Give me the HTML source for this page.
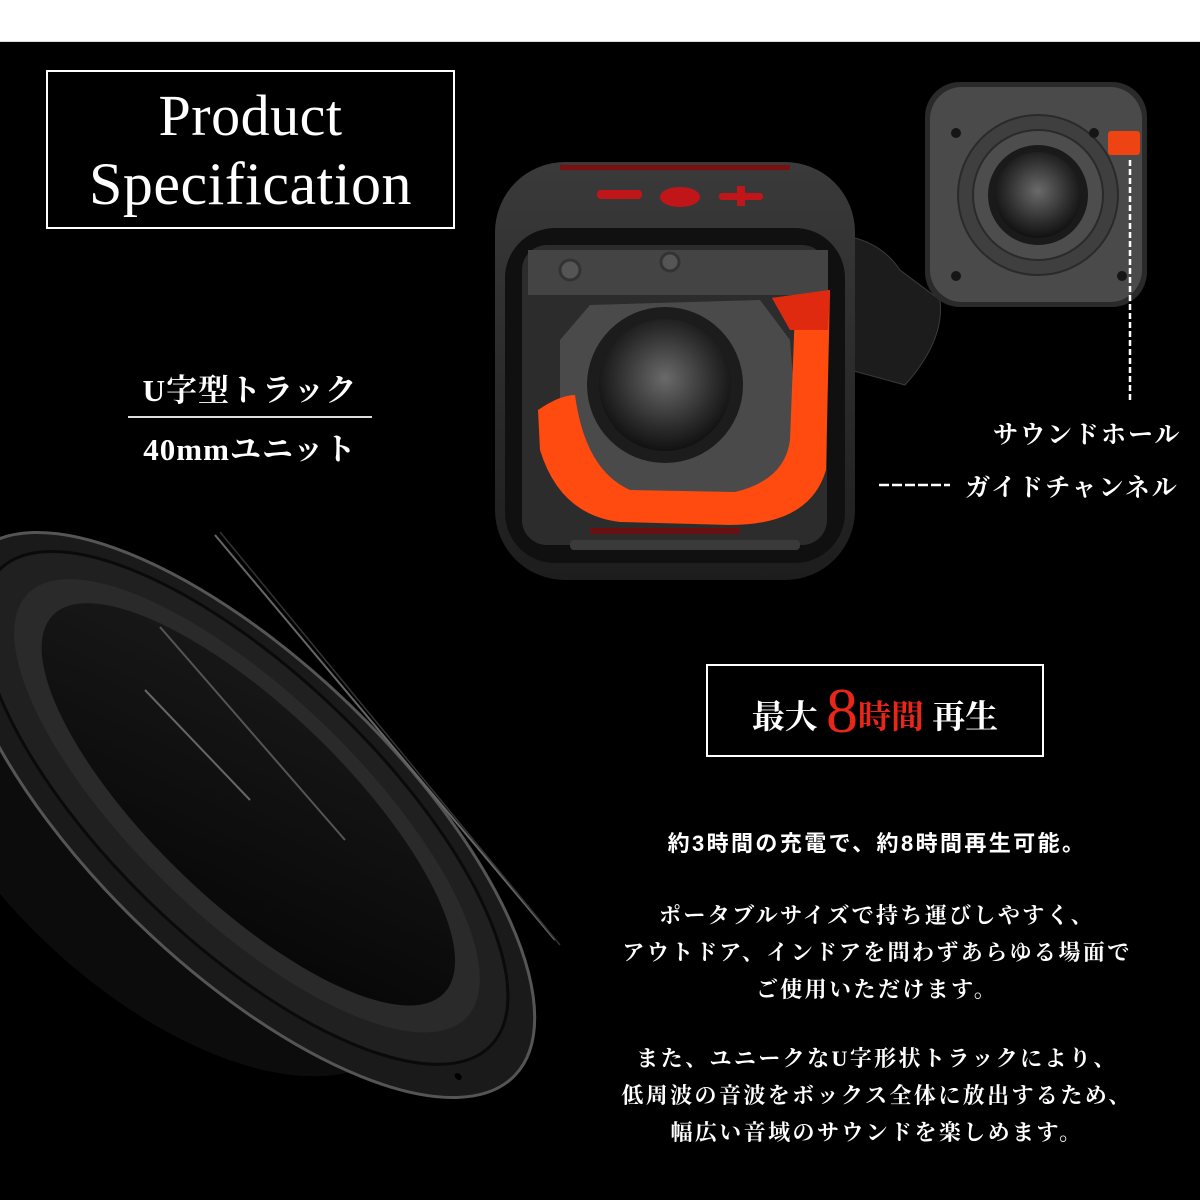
<!DOCTYPE html>
<html><head><meta charset="utf-8"><style>
html,body{margin:0;padding:0;}
body{width:1200px;height:1200px;position:relative;background:#000;overflow:hidden;font-family:"Liberation Serif","Noto Serif CJK JP",serif;color:#fff;}
.top{position:absolute;left:0;top:0;width:1200px;height:41px;background:#fff;border-bottom:1px solid #ddd;}
.abs{position:absolute;}
.title{left:46px;top:70px;width:409px;height:159px;border:2px solid #fff;text-align:center;font-size:58px;line-height:68px;padding-top:10px;box-sizing:border-box;letter-spacing:0.5px;}
.title .s{font-size:60px;}
.utext{left:120px;top:365px;width:260px;text-align:center;font-size:31px;letter-spacing:1px;font-weight:bold;}
.utext .l1{border-bottom:2px solid #ddd;padding-bottom:6px;margin:0 8px;}
.utext .l2{padding-top:6px;}
.lab{font-size:25px;letter-spacing:2px;white-space:nowrap;font-weight:bold;}
.box8{left:706px;top:664px;width:338px;height:93px;border:2px solid #fff;box-sizing:border-box;text-align:center;font-family:"Liberation Serif","Noto Serif CJK JP",serif;font-weight:bold;font-size:33px;line-height:89px;}
.box8 .red{color:#e8261a;}
.box8 .big{font-family:"Liberation Serif",serif;font-weight:normal;font-size:64px;vertical-align:-4px;}
.para{left:577px;width:600px;text-align:center;font-size:22px;letter-spacing:2.4px;line-height:37px;font-weight:bold;}
</style></head><body>
<div class="top"></div>

<svg class="abs" style="left:0;top:0" width="1200" height="1200" viewBox="0 0 1200 1200">
<defs>
<radialGradient id="cone" cx="50%" cy="45%" r="55%"><stop offset="0" stop-color="#6a6a6a"/><stop offset="0.7" stop-color="#2a2a2a"/><stop offset="1" stop-color="#111"/></radialGradient>
<linearGradient id="body" x1="0" y1="0" x2="0" y2="1"><stop offset="0" stop-color="#3a3a3a"/><stop offset="1" stop-color="#1d1d1d"/></linearGradient>
<linearGradient id="big" x1="0" y1="0" x2="1" y2="1"><stop offset="0" stop-color="#1a1a1a"/><stop offset="1" stop-color="#050505"/></linearGradient>
</defs>
<g transform="translate(245,815) rotate(44)">
<ellipse cx="-60" cy="60" rx="330" ry="170" fill="#0c0c0c"/>
<ellipse cx="0" cy="0" rx="375" ry="152" fill="#1a1a1a" stroke="#555" stroke-width="3"/>
<ellipse cx="-5" cy="-5" rx="342" ry="134" fill="#202020" stroke="#0a0a0a" stroke-width="3"/>
<ellipse cx="-5" cy="-8" rx="305" ry="112" fill="#2a2a2a"/>
<ellipse cx="-5" cy="-10" rx="272" ry="96" fill="url(#big)"/>
<ellipse cx="335" cy="40" rx="4" ry="3" fill="#000"/>
</g>
<path d="M215 535 L555 940" stroke="#666" stroke-width="2"/>
<path d="M220 532 L560 945" stroke="#333" stroke-width="1.5"/>
<path d="M160 627 L345 840" stroke="#555" stroke-width="2"/>
<path d="M145 690 L250 800" stroke="#666" stroke-width="2"/>

<path d="M840 235 Q880 240 900 270 L940 300 Q945 340 905 385 L850 370 Z" fill="#1c1c1c" stroke="#3a3a3a"/>
<rect x="495" y="162" width="360" height="418" rx="70" fill="url(#body)"/>
<rect x="560" y="165" width="230" height="5" fill="#7a1010"/>
<rect x="597" y="190" width="45" height="9" rx="4" fill="#c0161a"/>
<ellipse cx="680" cy="197" rx="20" ry="10" fill="#c0161a"/>
<rect x="719" y="193" width="44" height="7" rx="3" fill="#c0161a"/>
<rect x="737" y="186" width="8" height="20" fill="#c0161a"/>
<rect x="505" y="228" width="340" height="335" rx="50" fill="#101010"/>
<rect x="522" y="245" width="305" height="300" rx="25" fill="#2c2c2c"/>
<rect x="528" y="250" width="300" height="45" fill="#444"/>
<circle cx="570" cy="270" r="10" fill="#555" stroke="#333" stroke-width="3"/>
<circle cx="670" cy="262" r="9" fill="#555" stroke="#333" stroke-width="3"/>
<path d="M590 305 L760 300 L790 340 L800 470 L740 510 L600 500 L560 420 L560 340 Z" fill="#4a4a4a"/>
<circle cx="665" cy="385" r="78" fill="#1c1c1c"/>
<circle cx="665" cy="385" r="66" fill="url(#cone)"/>
<path d="M772 298 L830 290 L826 470 Q810 525 730 525 L620 522 Q560 515 540 450 L538 410 Q560 395 575 395 Q585 470 630 490 L735 492 Q785 480 790 440 L795 310 Z" fill="#ff4a10"/>
<path d="M772 298 L830 290 L828 330 L790 330 Z" fill="#e02a10"/>
<rect x="590" y="528" width="150" height="6" fill="#6a1010"/>
<rect x="570" y="540" width="230" height="10" rx="4" fill="#3a3a3a"/>

<rect x="925" y="82" width="222" height="225" rx="35" fill="#2a2a2a"/>
<rect x="930" y="87" width="212" height="215" rx="32" fill="#4a4a4a"/>
<circle cx="1038" cy="195" r="80" fill="#3f3f3f" stroke="#2a2a2a" stroke-width="2"/>
<circle cx="1038" cy="195" r="65" fill="#4d4d4d" stroke="#2a2a2a" stroke-width="2"/>
<circle cx="1038" cy="195" r="50" fill="#1a1a1a"/>
<circle cx="1038" cy="195" r="43" fill="url(#cone)"/>
<circle cx="956" cy="133" r="5" fill="#151515"/>
<circle cx="956" cy="276" r="5" fill="#151515"/>
<circle cx="1122" cy="276" r="5" fill="#151515"/>
<circle cx="1094" cy="133" r="5" fill="#151515"/>
<rect x="1108" y="131" width="32" height="24" rx="3" fill="#ee4414"/>
<line x1="1130" y1="160" x2="1130" y2="400" stroke="#fff" stroke-width="2.5" stroke-dasharray="6,3"/>
<line x1="879" y1="485" x2="950" y2="485" stroke="#fff" stroke-width="2.5" stroke-dasharray="10,3"/>
</svg>

<div class="abs title">Product<br><span class="s">Specification</span></div>
<div class="abs utext"><div class="l1">U字型トラック</div><div class="l2">40mmユニット</div></div>
<div class="abs lab" style="left:993px;top:415px;">サウンドホール</div>
<div class="abs lab" style="left:965px;top:468px;">ガイドチャンネル</div>
<div class="abs box8">最大 <span class="red"><span class="big">8</span>時間</span> 再生</div>
<div class="abs para" style="top:825px;font-family:'Liberation Sans','Noto Sans CJK JP',sans-serif;">約3時間の充電で、約8時間再生可能。</div>
<div class="abs para" style="top:897px;">ポータブルサイズで持ち運びしやすく、<br>アウトドア、インドアを問わずあらゆる場面で<br>ご使用いただけます。</div>
<div class="abs para" style="top:1040px;">また、ユニークなU字形状トラックにより、<br>低周波の音波をボックス全体に放出するため、<br>幅広い音域のサウンドを楽しめます。</div>
</body></html>
